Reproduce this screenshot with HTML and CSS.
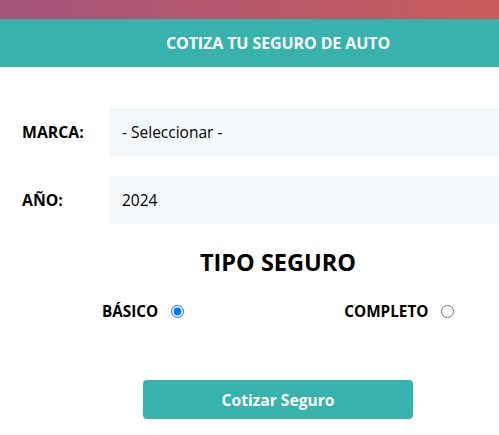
FILE: index.html
```html
<!DOCTYPE html>
<html lang="es">
<head>
<meta charset="utf-8">
<title>Cotiza tu seguro de auto</title>
<link rel="stylesheet" href="styles.css">
</head>
<body>
  <div class="topbar"></div>
  <div class="page">
    <header class="header">
      <h1 class="header-title">COTIZA TU SEGURO DE AUTO</h1>
    </header>
    <form class="form">
      <div class="field">
        <label class="label">MARCA:</label>
        <select class="input">
          <option>- Seleccionar -</option>
        </select>
      </div>
      <div class="field">
        <label class="label">AÑO:</label>
        <select class="input">
          <option>2024</option>
        </select>
      </div>
      <h2 class="subtitle">TIPO SEGURO</h2>
      <div class="radios">
        <label class="radio-group">BÁSICO <input type="radio" name="tipo" checked></label>
        <label class="radio-group">COMPLETO <input type="radio" name="tipo"></label>
      </div>
      <div class="actions">
        <button type="button" class="button">Cotizar Seguro</button>
      </div>
    </form>
  </div>
</body>
</html>
```
FILE: styles.css
```css
* { box-sizing: border-box; }
html, body { margin: 0; padding: 0; }
body {
  font-family: "Open Sans", "Noto Sans", sans-serif;
  background: #ffffff;
  color: #000;
  overflow: hidden;
  width: 499px;
}
.topbar {
  height: 19px;
  background: linear-gradient(90deg, #a5547c 0%, #c85c5a 100%);
}
.page {
  width: 556px;
}
.header {
  background: #38b2ac;
  height: 48px;
  display: flex;
  align-items: center;
  justify-content: center;
}
.header-title {
  margin: 0;
  color: #fff;
  font-size: 16px;
  font-weight: 700;
  letter-spacing: -0.1px;
}
.form {
  padding: 41px 0 0 22px;
}
.field {
  display: flex;
  align-items: center;
  margin-bottom: 20px;
}
.label {
  width: 88px;
  font-size: 15.8px;
  font-weight: 700;
}
.input {
  flex: 1;
  height: 48px;
  border: none;
  background: #f5f8fb;
  font-family: inherit;
  font-size: 15.5px;
  padding: 0 12px;
  appearance: none;
  -webkit-appearance: none;
  color: #000;
}
.subtitle {
  margin: 22px 0 0 -22px;
  text-align: center;
  font-size: 23.5px;
  font-weight: 700;
  line-height: 32px;
}
.radios {
  display: flex;
  gap: 160px;
  margin: 23px 0 0 80px;
  align-items: center;
}
.radio-group {
  display: flex;
  align-items: center;
  gap: 13px;
  font-size: 15.3px;
  font-weight: 700;
}
.radio-group input { margin: 0; width: 13px; height: 13px; }
.actions {
  display: flex;
  justify-content: center;
  margin: 59px 0 0 -22px;
}
.button {
  width: 270px;
  height: 39px;
  border: none;
  border-radius: 4px;
  background: #38b2ac;
  color: #fff;
  font-family: inherit;
  font-size: 15.6px;
  font-weight: 700;
}
```
